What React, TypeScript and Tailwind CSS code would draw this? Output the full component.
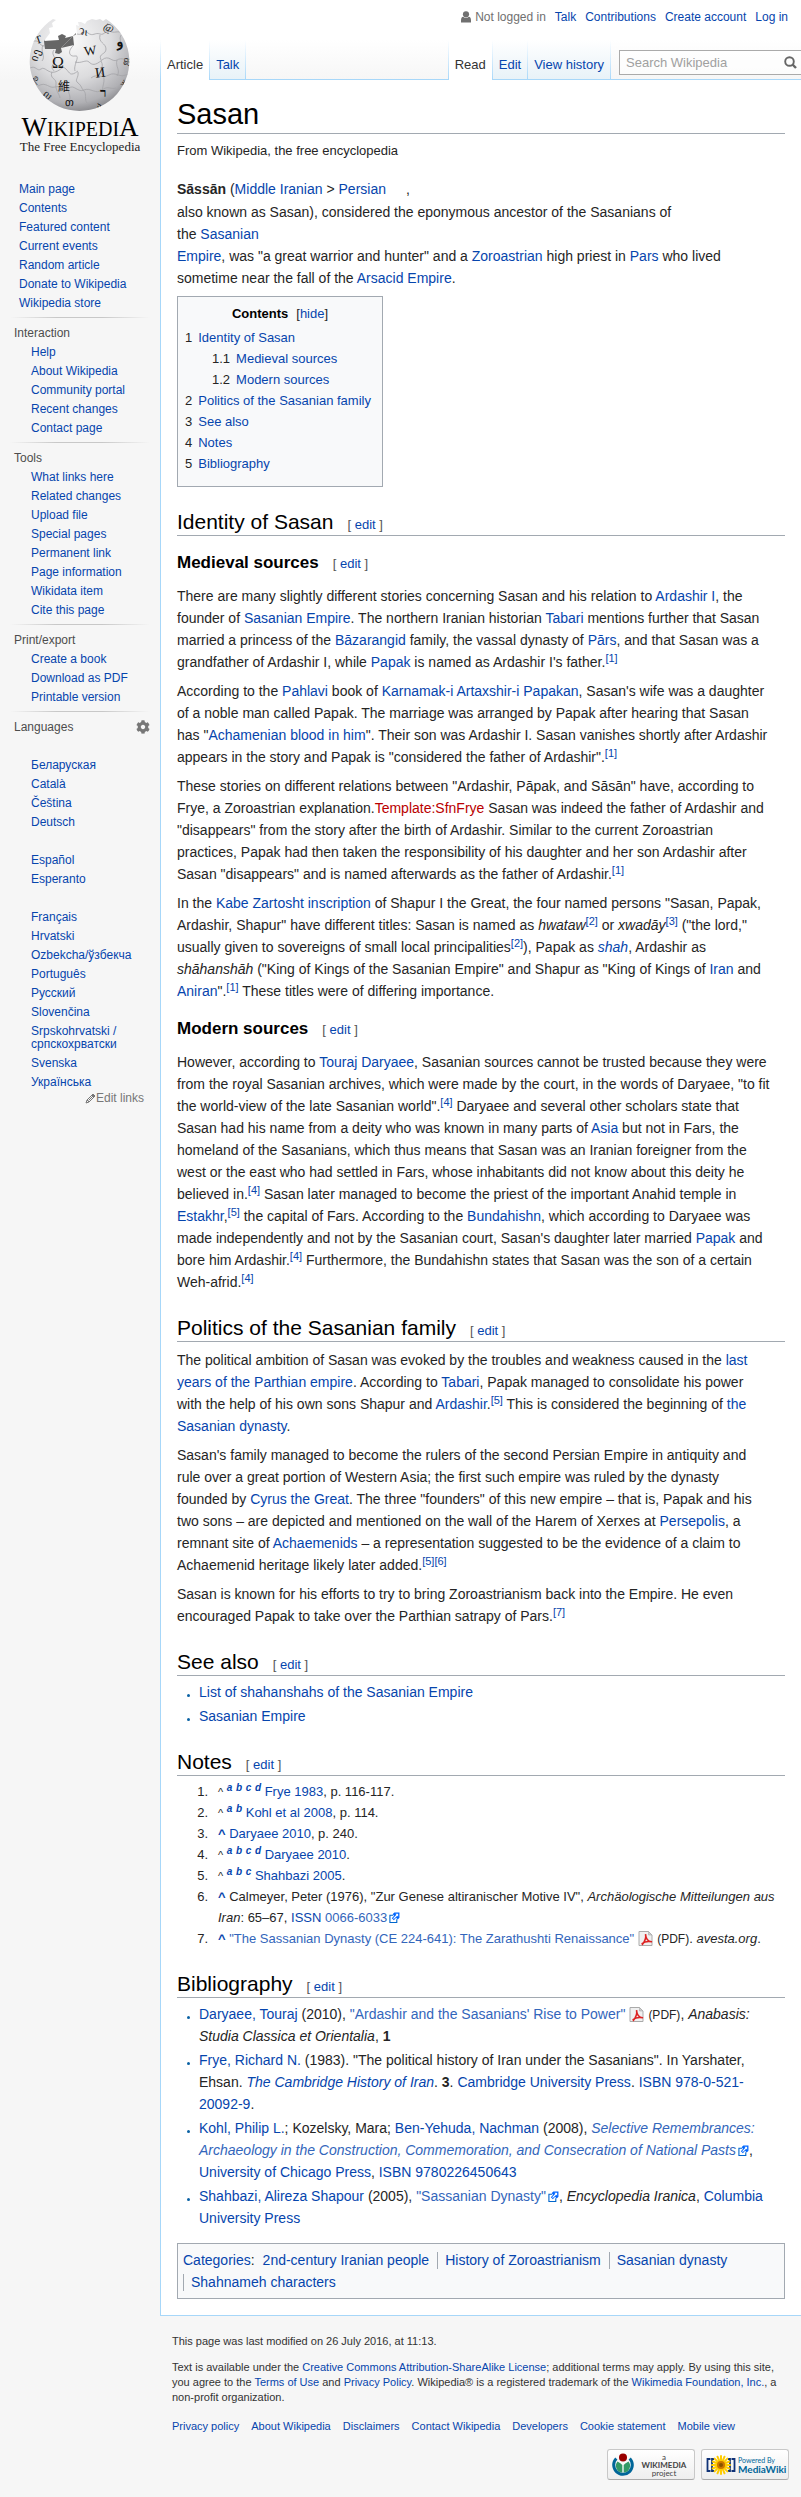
import type { ReactNode } from "react";
import { FaCog } from "react-icons/fa";

const link = "text-[#0645ad] hover:underline";

function A({ children, className = "" }: { children: ReactNode; className?: string }) {
  return (
    <a href="#" className={`${link} ${className}`}>
      {children}
    </a>
  );
}

function Ref({ n }: { n: number }) {
  return (
    <sup className="text-[11px] leading-0">
      <A>[{n}]</A>
    </sup>
  );
}

function Edit() {
  return (
    <span className="ml-3.5 text-[13px] leading-0 font-normal text-[#555]">
      [ <A>edit</A> ]
    </span>
  );
}

function H2({ children }: { children: ReactNode }) {
  return (
    <h2 className="mt-[22px] border-b border-[#a2a9b1] text-[21px] leading-[26px] text-black">
      {children}
      <Edit />
    </h2>
  );
}

function H3({ children }: { children: ReactNode }) {
  return (
    <h3 className="mt-3.5 mb-[9px] text-[17px] leading-[26px] font-bold text-black">
      {children}
      <Edit />
    </h3>
  );
}

function P({ children }: { children: ReactNode }) {
  return <p className="mt-[7px]">{children}</p>;
}

function Ext({ children, icon = true }: { children: ReactNode; icon?: boolean }) {
  return (
    <a href="#" className="text-[#3366bb] hover:underline">
      {children}
      {icon && <ExternalIcon />}
    </a>
  );
}

function ExternalIcon() {
  return (
    <svg className="ml-0.5 inline-block align-[-1px]" width="11" height="11" viewBox="0 0 12 12" aria-hidden="true">
      <path d="M4.5 3.5H1v8h7.5V8" fill="#fff" stroke="#06c" strokeWidth="1.2" />
      <path d="M5.8.6H11.4V6.2L9.5 8.2 7.8 6.4 5.3 8.9 3.1 6.7 5.6 4.2 4 2.5z" fill="#06f" />
      <path d="M7 2h3v3.2L9 4.2 5.3 7.6 4.5 6.7 8 3z" fill="#fff" />
    </svg>
  );
}

function PdfIcon() {
  return (
    <svg className="mx-1 inline-block align-[-3px]" width="15" height="15" viewBox="0 0 15 15" aria-hidden="true">
      <path d="M1 .5h9.5L14 4v10.500H1z" fill="#f0f0f0" stroke="#aaa" />
      <path d="M10.500.5V4H14z" fill="#ccc" stroke="#aaa" strokeWidth=".6" />
      <path d="M4 14C6.500 11 8.300 7 7.500 3.200 8 8 10.500 11 14 10.800 10 10 6 11 3.600 12.800" fill="none" stroke="#d22" strokeWidth="1.500" />
    </svg>
  );
}

function Globe() {
  return (
    <svg className="mx-auto block h-[95px] w-[106px]" viewBox="28 17 106 95" role="img" aria-label="Wikipedia globe">
      <defs>
        <radialGradient id="ball" cx="0.42" cy="0.3" r="0.75">
          <stop offset="0" stopColor="#fafafa" />
          <stop offset="0.5" stopColor="#dcdcde" />
          <stop offset="0.82" stopColor="#b0b0b4" />
          <stop offset="1" stopColor="#77777b" />
        </radialGradient>
        <clipPath id="shell">
          <path d="M54 19A49.800 49.800 0 1 0 107 19L104 21 101 19 97 20 93 19 88 21 86 24 82 22 79 22 80 26 77 25 78 34 74 36 62 48 46 48 45 41 51 33 50 28 54 27 53 23 57 20z" />
        </clipPath>
      </defs>
      <path d="M45 41 60 40 59 36 63 34 67 36 66 38 74 36 77 33 76 46 60 52 45 50z" fill="#666" />
      <g clipPath="url(#shell)">
        <rect x="28" y="10" width="106" height="102" fill="url(#ball)" />
        <path d="M45 40 60 39 59 36 63 35 66 36 66 38 74 36 75 45 62 48 63 52 60 54 56 53 57 49 46 49z" fill="#666" />
        <g fill="none" stroke="#a4a4a8" strokeWidth=".8">
          <path d="M33 42c7-4 7 4 12 4M31 68c6-3 7 4 11 1s7 5 14 3 7-7 11-3 4 8 12 2M75 45c-7 6-5 12 1 11s-2 9 0 15M78 34c7 2 6-5 11-1s7-1 12 1 6-6 10-3 8-1 12 2M76 62c6 2 11-3 14 0s6 4 13-2 10 3 15 0 8 1 13-2M101 35c-2 8 6 8 6 14s-8 4-5 11M53 72c-3 7 5 6 4 12s3 9 4 14M79 72c1 6-4 8 0 11s3 5 6 8 0 8 3 12M39 86c8-5 11 3 17 1s9 5 14 1 9 5 15 2 12 5 18 0 9 0 14-2M102 61c4 7-3 9 1 13s1 11 0 17M92 78c6-5 11 1 18-3s10 4 19-1M109 23c-3 4 0 7 0 10M55 50c-4 5 4 8 0 13s-1 6 0 8" />
          <path d="M122 35c-3 6 3 9 0 14M44 45c-3 7 3 11-1 16M118 60c-2 7 4 10 0 16M70 88c-2 5 3 8 0 13" />
        </g>
        <g fill="#111" fontFamily="'Liberation Serif',serif">
          <text x="53" y="68" fontSize="16">Ω</text>
          <text x="85" y="55" fontSize="13" transform="rotate(-8 91 50)">W</text>
          <text x="96" y="77" fontSize="14" transform="rotate(-8 102 72)">И</text>
          <text x="59" y="91" fontSize="12" fontFamily="'Noto Sans CJK TC',sans-serif">維</text>
          <text x="101" y="97" fontSize="13" fontWeight="bold">ר</text>
          <text x="80" y="35" fontSize="11" transform="rotate(8 84 30)">วι</text>
          <text x="105" y="31" fontSize="11" transform="rotate(28 109 27)">@</text>
          <text x="117" y="46" fontSize="14" fontWeight="bold" transform="rotate(-12 120 43)">و</text>
          <text x="36" y="43" fontSize="11" transform="rotate(-20 40 39)">Т</text>
          <text x="33" y="61" fontSize="11" transform="rotate(-72 36 58)">იე</text>
          <text x="34" y="82" fontSize="10" transform="rotate(55 37 79)">உ</text>
          <text x="66" y="106" fontSize="11">თ</text>
          <text x="123" y="66" fontSize="10" transform="rotate(-80 126 62)">ஐ</text>
          <text x="120" y="86" fontSize="10" transform="rotate(-55 124 82)">ж</text>
          <text x="44" y="98" fontSize="9" transform="rotate(40 47 95)">ល</text>
          <text x="97" y="108" fontSize="9" transform="rotate(-24 101 105)">ა</text>
        </g>
      </g>
    </svg>
  );
}

const navigation = ["Main page", "Contents", "Featured content", "Current events", "Random article", "Donate to Wikipedia", "Wikipedia store"];

const portals = [
  { title: "Interaction", items: ["Help", "About Wikipedia", "Community portal", "Recent changes", "Contact page"] },
  {
    title: "Tools",
    items: ["What links here", "Related changes", "Upload file", "Special pages", "Permanent link", "Page information", "Wikidata item", "Cite this page"],
  },
  { title: "Print/export", items: ["Create a book", "Download as PDF", "Printable version"] },
  {
    title: "Languages",
    items: ["", "Беларуская", "Català", "Čeština", "Deutsch", "", "Español", "Esperanto", "", "Français", "Hrvatski", "Ozbekcha/ўзбекча", "Português", "Русский", "Slovenčina", "Srpskohrvatski / српскохрватски", "Svenska", "Українська"],
  },
];

function Sidebar() {
  return (
    <aside className="w-40 shrink-0 pt-[17px] text-[12px] leading-[13px]">
      <a href="#" className="block h-[163px] text-center font-['Liberation_Serif','Times_New_Roman',serif] text-black">
        <Globe />
        <span className="mt-[5px] block text-[20px] leading-[25px] whitespace-nowrap">
          <span className="text-[27px] leading-0">W</span>IKIPEDI<span className="text-[27px] leading-0">A</span>
        </span>
        <span className="block text-[13px] leading-[9px] whitespace-nowrap text-[#222]">The Free Encyclopedia</span>
      </a>
      <nav aria-label="Navigation">
        <ul className="mb-1 pl-[19px]">
          {navigation.map((item) => (
            <li key={item} className="py-[3px]">
              <A>{item}</A>
            </li>
          ))}
        </ul>
      </nav>
      {portals.map(({ title, items }) => (
        <nav key={title} aria-label={title} className="pb-1">
          <div className="mr-2.5 ml-2.5 h-px bg-[linear-gradient(to_right,#f6f6f6,#c8c8c8_33%,#c8c8c8_66%,#f6f6f6)]" />
          <h3 className="flex items-center justify-between pt-[5px] pr-2.5 pl-3.5 leading-5 text-[#4d4d4d]">
            {title}
            {title === "Languages" && (
              <button type="button" aria-label="Language settings" className="text-[#777]">
                <FaCog size={14} />
              </button>
            )}
          </h3>
          <ul className="pr-5 pl-[31px]">
            {items.map((item, i) => (
              <li key={i} className="min-h-[19px] py-[3px]">
                {item && <A>{item}</A>}
              </li>
            ))}
          </ul>
          {title === "Languages" && (
            <a href="#" className="mr-4 flex items-center justify-end text-[#777]">
              <svg width="11" height="11" viewBox="0 0 11 11" aria-hidden="true">
                <path d="M1 10 2 7 8 1l2 2-6 6zM2 7l2 2M3.500 7.500 9 2M7 2l2 2" fill="none" stroke="#777" />
              </svg>
              Edit links
            </a>
          )}
        </nav>
      ))}
    </aside>
  );
}

const fadeLine = "w-px shrink-0 bg-linear-to-b from-white to-[#a7d7f9]";

function Tab({ children, selected = false }: { children: ReactNode; selected?: boolean }) {
  return selected ? (
    <a href="#" className="flex items-end bg-white px-1.5 pb-1.5 text-[#333]">
      {children}
    </a>
  ) : (
    <a href="#" className="flex items-end border-b border-[#a7d7f9] bg-linear-to-b from-white to-[#e8f2f8] px-1.5 pb-[5px] text-[#0645ad]">
      {children}
    </a>
  );
}

function Header() {
  return (
    <header>
      <ul className="flex h-10 items-start justify-end gap-[9px] pt-[9px] pr-[13px] text-[12px] leading-[16px]">
        <li className="flex items-center gap-1 text-[#707070]">
          <svg width="10" height="12" viewBox="0 0 10 12" aria-hidden="true">
            <circle cx="5" cy="3.300" r="3.100" fill="#707070" />
            <path d="M0 11.500V9.500Q0 6 2.200 5.800 5 8.200 7.800 5.800 10 6 10 9.500v2z" fill="#707070" />
          </svg>
          Not logged in
        </li>
        {["Talk", "Contributions", "Create account", "Log in"].map((item) => (
          <li key={item}>
            <A>{item}</A>
          </li>
        ))}
      </ul>
      <div className="flex h-10 text-[13px] leading-[18px] whitespace-nowrap">
        <span className={fadeLine} />
        <Tab selected>Article</Tab>
        <span className={fadeLine} />
        <Tab>Talk</Tab>
        <span className={fadeLine} />
        <span className="grow border-b border-[#a7d7f9]" />
        <span className={fadeLine} />
        <Tab selected>Read</Tab>
        <span className={fadeLine} />
        <Tab>Edit</Tab>
        <span className={fadeLine} />
        <Tab>View history</Tab>
        <span className={fadeLine} />
        <form className="w-[190px] border-b border-[#a7d7f9] pt-2.5 pl-2">
          <div className="flex h-[25px] items-center border border-r-0 border-[#aaa] bg-white/60 pr-1 pl-1.5">
            <input
              type="search"
              aria-label="Search Wikipedia"
              placeholder="Search Wikipedia"
              className="min-w-0 grow bg-transparent outline-none placeholder:text-[#a0a0a0]"
            />
            <button type="button" aria-label="Search">
              <svg width="13" height="13" viewBox="0 0 13 13" aria-hidden="true">
                <circle cx="5.500" cy="5.500" r="4.300" fill="none" stroke="#666" strokeWidth="1.900" />
                <path d="M8.500 8.500 12 12" stroke="#666" strokeWidth="2.400" />
              </svg>
            </button>
          </div>
        </form>
      </div>
    </header>
  );
}

function TocRow({ n, children, sub = false }: { n: string; children: ReactNode; sub?: boolean }) {
  return (
    <li className={sub ? "ml-[27px] flex gap-1.5" : "flex gap-1.5"}>
      <span>{n}</span>
      <A>{children}</A>
    </li>
  );
}

function Toc() {
  return (
    <nav aria-label="Contents" className="mt-[7px] w-fit min-w-[206px] border border-[#a2a9b1] bg-[#f8f9fa] px-[7px] pt-1.5 pb-3 text-[13px] leading-[21px]">
      <div className="mb-[3px] text-center">
        <b className="text-black">Contents</b>
        <button type="button" className="ml-2">
          [<span className="text-[#0645ad]">hide</span>]
        </button>
      </div>
      <ul>
        <TocRow n="1">Identity of Sasan</TocRow>
        <TocRow n="1.1" sub>Medieval sources</TocRow>
        <TocRow n="1.2" sub>Modern sources</TocRow>
        <TocRow n="2">Politics of the Sasanian family</TocRow>
        <TocRow n="3">See also</TocRow>
        <TocRow n="4">Notes</TocRow>
        <TocRow n="5">Bibliography</TocRow>
      </ul>
    </nav>
  );
}

function Back({ letters }: { letters: string }) {
  return (
    <>
      <span className="text-[11px] leading-0">^</span>{" "}
      {letters.split("").map((l) => (
        <span key={l}>
          <sup className="text-[10px] leading-0 font-bold italic">
            <A>{l}</A>
          </sup>{" "}
        </span>
      ))}
    </>
  );
}

function Caret() {
  return <A className="font-bold">^ </A>;
}

function Note({ n, children }: { n: number; children: ReactNode }) {
  return (
    <li className="flex gap-2.5">
      <span className="w-[31px] shrink-0 text-right">{n}.</span>
      <div>{children}</div>
    </li>
  );
}

function Bullet({ children }: { children: ReactNode }) {
  return (
    <li className="mb-0.5 flex last:mb-0">
      <span className="w-[22px] shrink-0 pt-[13px] pl-2.5">
        <span className="block size-[3px] rounded-full bg-[#0a62a4]" />
      </span>
      <div>{children}</div>
    </li>
  );
}

function Article() {
  return (
    <main className="border-b border-l border-[#a7d7f9] bg-white px-4 pt-[18px] pb-4 text-[14px] leading-[22px] text-[#252525]">
      <h1 className="border-b border-[#a2a9b1] pb-[3px] text-[29px] leading-[32px] text-black">Sasan</h1>
      <p className="mt-[7px] text-[13px] leading-5">From Wikipedia, the free encyclopedia</p>
      <p className="mt-[17px]">
        <span className="block leading-[23px]">
          <b>Sāssān</b> (<A>Middle Iranian</A> &gt; <A>Persian</A> <span className="ml-4">,</span>
        </span>
        also known as Sasan), considered the eponymous ancestor of the Sasanians of
        <br />
        the <A>Sasanian<br />Empire</A>, was "a great warrior and hunter" and a <A>Zoroastrian</A> high priest in <A>Pars</A> who lived
        <br />
        sometime near the fall of the <A>Arsacid Empire</A>.
      </p>
      <Toc />

      <H2>Identity of Sasan</H2>
      <H3>Medieval sources</H3>
      <P>
        There are many slightly different stories concerning Sasan and his relation to <A>Ardashir I</A>, the<br />
        founder of <A>Sasanian Empire</A>. The northern Iranian historian <A>Tabari</A> mentions further that Sasan<br />
        married a princess of the <A>Bāzarangid</A> family, the vassal dynasty of <A>Pārs</A>, and that Sasan was a<br />
        grandfather of Ardashir I, while <A>Papak</A> is named as Ardashir I's father.<Ref n={1} />
      </P>
      <P>
        According to the <A>Pahlavi</A> book of <A>Karnamak-i Artaxshir-i Papakan</A>, Sasan's wife was a daughter<br />
        of a noble man called Papak. The marriage was arranged by Papak after hearing that Sasan<br />
        has "<A>Achamenian blood in him</A>". Their son was Ardashir I. Sasan vanishes shortly after Ardashir<br />
        appears in the story and Papak is "considered the father of Ardashir".<Ref n={1} />
      </P>
      <P>
        These stories on different relations between "Ardashir, Pāpak, and Sāsān" have, according to<br />
        Frye, a Zoroastrian explanation.<a href="#" className="text-[#ba0000]">Template:SfnFrye</a> Sasan was indeed the father of Ardashir and<br />
        "disappears" from the story after the birth of Ardashir. Similar to the current Zoroastrian<br />
        practices, Papak had then taken the responsibility of his daughter and her son Ardashir after<br />
        Sasan "disappears" and is named afterwards as the father of Ardashir.<Ref n={1} />
      </P>
      <P>
        In the <A>Kabe Zartosht inscription</A> of Shapur I the Great, the four named persons "Sasan, Papak,<br />
        Ardashir, Shapur" have different titles: Sasan is named as <i>hwataw</i><Ref n={2} /> or <i>xwadāy</i><Ref n={3} /> ("the lord,"<br />
        usually given to sovereigns of small local principalities<Ref n={2} />), Papak as <A className="italic">shah</A>, Ardashir as<br />
        <i>shāhanshāh</i> ("King of Kings of the Sasanian Empire" and Shapur as "King of Kings of <A>Iran</A> and<br />
        <A>Aniran</A>".<Ref n={1} /> These titles were of differing importance.
      </P>

      <H3>Modern sources</H3>
      <P>
        However, according to <A>Touraj Daryaee</A>, Sasanian sources cannot be trusted because they were<br />
        from the royal Sasanian archives, which were made by the court, in the words of Daryaee, "to fit<br />
        the world-view of the late Sasanian world".<Ref n={4} /> Daryaee and several other scholars state that<br />
        Sasan had his name from a deity who was known in many parts of <A>Asia</A> but not in Fars, the<br />
        homeland of the Sasanians, which thus means that Sasan was an Iranian foreigner from the<br />
        west or the east who had settled in Fars, whose inhabitants did not know about this deity he<br />
        believed in.<Ref n={4} /> Sasan later managed to become the priest of the important Anahid temple in<br />
        <A>Estakhr</A>,<Ref n={5} /> the capital of Fars. According to the <A>Bundahishn</A>, which according to Daryaee was<br />
        made independently and not by the Sasanian court, Sasan's daughter later married <A>Papak</A> and<br />
        bore him Ardashir.<Ref n={4} /> Furthermore, the Bundahishn states that Sasan was the son of a certain<br />
        Weh-afrid.<Ref n={4} />
      </P>

      <H2>Politics of the Sasanian family</H2>
      <P>
        The political ambition of Sasan was evoked by the troubles and weakness caused in the <A>last<br />
        years of the Parthian empire</A>. According to <A>Tabari</A>, Papak managed to consolidate his power<br />
        with the help of his own sons Shapur and <A>Ardashir</A>.<Ref n={5} /> This is considered the beginning of <A>the<br />
        Sasanian dynasty</A>.
      </P>
      <P>
        Sasan's family managed to become the rulers of the second Persian Empire in antiquity and<br />
        rule over a great portion of Western Asia; the first such empire was ruled by the dynasty<br />
        founded by <A>Cyrus the Great</A>. The three "founders" of this new empire – that is, Papak and his<br />
        two sons – are depicted and mentioned on the wall of the Harem of Xerxes at <A>Persepolis</A>, a<br />
        remnant site of <A>Achaemenids</A> – a representation suggested to be the evidence of a claim to<br />
        Achaemenid heritage likely later added.<Ref n={5} /><Ref n={6} />
      </P>
      <P>
        Sasan is known for his efforts to try to bring Zoroastrianism back into the Empire. He even<br />
        encouraged Papak to take over the Parthian satrapy of Pars.<Ref n={7} />
      </P>

      <H2>See also</H2>
      <ul className="mt-[5px]">
        <Bullet><A>List of shahanshahs of the Sasanian Empire</A></Bullet>
        <Bullet><A>Sasanian Empire</A></Bullet>
      </ul>

      <H2>Notes</H2>
      <ol className="mt-[5px] text-[13px] leading-[21px]">
        <Note n={1}><Back letters="abcd" /><A>Frye 1983</A>, p. 116-117.</Note>
        <Note n={2}><Back letters="ab" /><A>Kohl et al 2008</A>, p. 114.</Note>
        <Note n={3}><Caret /> <A>Daryaee 2010</A>, p. 240.</Note>
        <Note n={4}><Back letters="abcd" /><A>Daryaee 2010</A>.</Note>
        <Note n={5}><Back letters="abc" /><A>Shahbazi 2005</A>.</Note>
        <Note n={6}>
          <Caret /> Calmeyer, Peter (1976), "Zur Genese altiranischer Motive IV", <i>Archäologische Mitteilungen aus<br />Iran</i>: 65–67, <A>ISSN</A> <Ext>0066-6033</Ext>
        </Note>
        <Note n={7}>
          <Caret /> <Ext icon={false}>"The Sassanian Dynasty (CE 224-641): The Zarathushti Renaissance"<PdfIcon /></Ext>
          <span className="text-[12px] leading-0">(PDF)</span>. <i>avesta.org</i>.
        </Note>
      </ol>

      <H2>Bibliography</H2>
      <ul className="mt-[5px]">
        <Bullet>
          <A>Daryaee, Touraj</A> (2010), <Ext icon={false}>"Ardashir and the Sasanians' Rise to Power"<PdfIcon /></Ext>
          <span className="text-[12px] leading-0">(PDF)</span>, <i>Anabasis:<br />Studia Classica et Orientalia</i>, <b>1</b>
        </Bullet>
        <Bullet>
          <A>Frye, Richard N.</A> (1983). "The political history of Iran under the Sasanians". In Yarshater,<br />
          Ehsan. <A className="italic">The Cambridge History of Iran</A>. <b>3</b>. <A>Cambridge University Press</A>. <A>ISBN 978-0-521-<br />20092-9</A>.
        </Bullet>
        <Bullet>
          <A>Kohl, Philip L.</A>; Kozelsky, Mara; <A>Ben-Yehuda, Nachman</A> (2008), <i><Ext>Selective Remembrances:<br />
          Archaeology in the Construction, Commemoration, and Consecration of National Pasts</Ext></i>,<br />
          <A>University of Chicago Press</A>, <A>ISBN 9780226450643</A>
        </Bullet>
        <Bullet>
          <A>Shahbazi, Alireza Shapour</A> (2005), <Ext>"Sassanian Dynasty"</Ext>, <i>Encyclopedia Iranica</i>, <A>Columbia<br />University Press</A>
        </Bullet>
      </ul>

      <div className="mt-3.5 border border-[#a2a9b1] bg-[#f8f9fa] px-[5px] py-[5px]">
        <ul className="flex flex-wrap">
          <li className="pr-2"><A>Categories</A>:</li>
          {["2nd-century Iranian people", "History of Zoroastrianism", "Sasanian dynasty", "Shahnameh characters"].map((c, i) => (
            <li key={c} className="flex items-center">
              {i > 0 && <span className="mr-[7px] h-[17px] w-px bg-[#a2a9b1]" />}
              <A className="pr-2">{c}</A>
            </li>
          ))}
        </ul>
      </div>
    </main>
  );
}

const badge = "flex h-[31px] w-[88px] items-center rounded-[3px] border border-[#c8c8c8] border-b-[#aaa] bg-linear-to-b from-white to-[#eee]";

function Footer() {
  return (
    <footer className="px-3 pt-[18px] pb-[17px] text-[11px] leading-[15px] text-[#333]">
      <p>This page was last modified on 26 July 2016, at 11:13.</p>
      <p className="mt-[11px]">
        Text is available under the <A>Creative Commons Attribution-ShareAlike License</A>; additional terms may apply. By using this site,<br />
        you agree to the <A>Terms of Use</A> and <A>Privacy Policy</A>. Wikipedia® is a registered trademark of the <A>Wikimedia Foundation, Inc.</A>, a<br />
        non-profit organization.
      </p>
      <ul className="mt-3.5 flex flex-wrap gap-x-3">
        {["Privacy policy", "About Wikipedia", "Disclaimers", "Contact Wikipedia", "Developers", "Cookie statement", "Mobile view"].map((item) => (
          <li key={item}>
            <A>{item}</A>
          </li>
        ))}
      </ul>
      <div className="mt-[15px] flex justify-end gap-1.5">
        <a href="#" className={badge}>
          <svg className="ml-1" width="22" height="24" viewBox="0 0 22 24" aria-hidden="true">
            <path d="M4.300 5.500A9.300 9.300 0 1 0 17.700 5.500" fill="none" stroke="#069" strokeWidth="3" />
            <path d="M5.500 8.500Q9.500 10.500 10.300 12v7.500A6.700 6.700 0 0 1 5.500 8.500zM16.500 8.500Q12.500 10.500 11.700 12v7.500A6.700 6.700 0 0 0 16.500 8.500z" fill="#396" />
            <circle cx="11" cy="4.500" r="4" fill="#900" />
          </svg>
          <span className="grow text-center font-['Lato',sans-serif] text-[8px] leading-[8px] text-[#444]">
            a
            <span className="block font-bold">WIKIMEDIA</span>
            project
          </span>
        </a>
        <a href="#" className={badge}>
          <svg className="ml-1" width="30" height="24" viewBox="0 0 30 24" aria-hidden="true">
            <path d="M4.500 6H1.500V18H4.500M8 6H6V18H8M25.500 6H28.500V18H25.500M22 6H24V18H22" fill="none" stroke="#137" strokeWidth="1.800" />
            <g stroke="#fc0" strokeWidth="2" strokeLinecap="round">
              <path d="M15 3V21M6 12H24M8.600 5.600 21.400 18.400M21.400 5.600 8.600 18.400M11.500 3.700 18.500 20.300M18.500 3.700 11.500 20.300M6.700 8.500 23.300 15.500M23.300 8.500 6.700 15.500" />
            </g>
            <circle cx="15" cy="12" r="4" fill="#c70" />
            <circle cx="15" cy="12" r="2" fill="#850" />
          </svg>
          <span className="ml-0.5 font-['Lato',sans-serif] text-[7px] leading-[9px] whitespace-nowrap text-[#069]">
            Powered By
            <span className="block text-[10px] font-bold">MediaWiki</span>
          </span>
        </a>
      </div>
    </footer>
  );
}

export default function App() {
  return (
    <div className="flex min-h-screen bg-[linear-gradient(to_bottom,#ffffff_40px,#f6f6f6_80px)] font-['Liberation_Sans',Arial,sans-serif]">
      <Sidebar />
      <div className="min-w-0 grow">
        <Header />
        <Article />
        <Footer />
      </div>
    </div>
  );
}
